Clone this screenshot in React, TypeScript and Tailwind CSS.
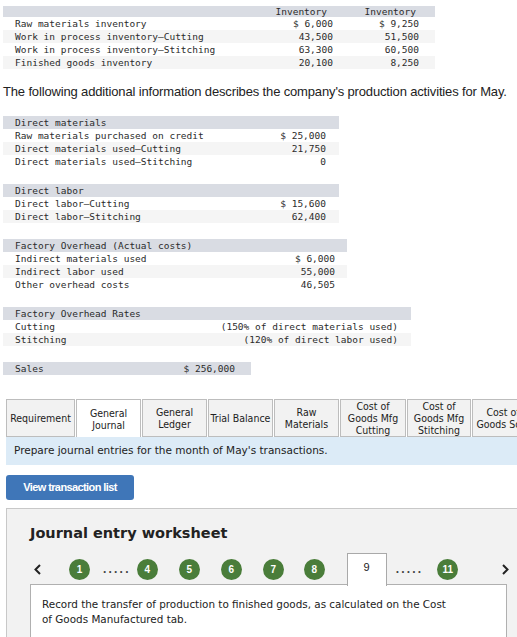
import React from 'react';

const MONO = "font-['DejaVu_Sans_Mono',monospace] text-[9.5px] text-[#2b2b2b]";
const COND = "font-['DejaVu_Sans_Condensed','DejaVu_Sans',sans-serif]";
const SANS = "font-['DejaVu_Sans',sans-serif]";

type Pair = [string, string];

function Sheet({ w, pr, title, rows }: { w: string; pr: string; title: string; rows: Pair[] }) {
  return (
    <div className={`${w} ml-[3px] ${MONO}`}>
      <div className="flex h-[13px] bg-[#d9dce3] leading-[13px]">
        <span className="pl-[12px]">{title}</span>
      </div>
      {rows.map(([label, value], i) => (
        <div key={label} className={`flex h-[13px] leading-[13px] ${i % 2 === 1 ? 'bg-[#f5f5f5]' : ''}`}>
          <span className="flex-1 pl-[12px]">{label}</span>
          <span className={`${pr} whitespace-pre`}>{value}</span>
        </div>
      ))}
    </div>
  );
}

function Inventories() {
  const rows: [string, string, string][] = [
    ['Raw materials inventory', '$ 6,000', '$ 9,250'],
    ['Work in process inventory\u2014Cutting', '43,500', '51,500'],
    ['Work in process inventory\u2014Stitching', '63,300', '60,500'],
    ['Finished goods inventory', '20,100', '8,250'],
  ];
  return (
    <div className={`mt-[6px] ml-[3px] w-[432px] ${MONO}`}>
      <div className="flex h-[11px] bg-[#d9dce3] leading-[11px]">
        <span className="flex-1" />
        <span className="w-[100px] pr-[6px] text-right">Inventory</span>
        <span className="w-[86px] pr-[3px] text-right">Inventory</span>
        <span className="w-[16px]" />
      </div>
      {rows.map(([label, a, b], i) => (
        <div key={label} className={`flex h-[13px] leading-[13px] ${i % 2 === 1 ? 'bg-[#f5f5f5]' : ''}`}>
          <span className="flex-1 pl-[12px]">{label}</span>
          <span className="w-[100px] text-right whitespace-pre">{a}</span>
          <span className="w-[86px] text-right whitespace-pre">{b}</span>
          <span className="w-[16px]" />
        </div>
      ))}
    </div>
  );
}

const tabs: { label: string[]; w: string; active?: boolean }[] = [
  { label: ['Requirement'], w: 'w-[69px]' },
  { label: ['General', 'Journal'], w: 'w-[65px]', active: true },
  { label: ['General', 'Ledger'], w: 'w-[65px]' },
  { label: ['Trial Balance'], w: 'w-[65px]' },
  { label: ['Raw', 'Materials'], w: 'w-[65px]' },
  { label: ['Cost of', 'Goods Mfg', 'Cutting'], w: 'w-[66px]' },
  { label: ['Cost of', 'Goods Mfg', 'Stitching'], w: 'w-[64px]' },
  { label: ['Cost of', 'Goods Sold'], w: 'w-[62px]' },
];

function Circle({ n }: { n: string }) {
  return (
    <span className="flex h-[21px] w-[21px] shrink-0 items-center justify-center rounded-full bg-[#4a7d3a] font-['Liberation_Sans',sans-serif] text-[10px] font-bold text-white">
      {n}
    </span>
  );
}

function Dots({ className }: { className: string }) {
  return (
    <span className={`${className} h-[21px] shrink-0 font-['Liberation_Sans',sans-serif] text-[12px] font-bold leading-[21px] tracking-[2.2px] text-[#444]`}>
      .....
    </span>
  );
}

function Chevron({ dir }: { dir: 'l' | 'r' }) {
  return (
    <svg width="7" height="11" viewBox="0 0 7 11" className="shrink-0">
      <polyline
        points={dir === 'l' ? '6,1 1.5,5.5 6,10' : '1,1 5.5,5.5 1,10'}
        fill="none"
        stroke="#222"
        strokeWidth="2"
      />
    </svg>
  );
}

export default function App() {
  return (
    <div className="flex h-[637px] w-[517px] flex-col overflow-hidden bg-white">
      <Inventories />

      <p className="mt-[15px] ml-[3px] h-[15px] whitespace-nowrap font-['Liberation_Sans',sans-serif] text-[13px] leading-[15px] tracking-[-0.15px] text-[#222]">
        The following additional information describes the company's production activities for May.
      </p>

      <div className="mt-[17px]">
        <Sheet
          w="w-[336px]"
          pr="pr-[13px]"
          title="Direct materials"
          rows={[
            ['Raw materials purchased on credit', '$ 25,000'],
            ['Direct materials used\u2014Cutting', '21,750'],
            ['Direct materials used\u2014Stitching', '0'],
          ]}
        />
      </div>
      <div className="mt-[16px]">
        <Sheet
          w="w-[336px]"
          pr="pr-[13px]"
          title="Direct labor"
          rows={[
            ['Direct labor\u2014Cutting', '$ 15,600'],
            ['Direct labor\u2014Stitching', '62,400'],
          ]}
        />
      </div>
      <div className="mt-[16px]">
        <Sheet
          w="w-[344px]"
          pr="pr-[12px]"
          title="Factory Overhead (Actual costs)"
          rows={[
            ['Indirect materials used', '$ 6,000'],
            ['Indirect labor used', '55,000'],
            ['Other overhead costs', '46,505'],
          ]}
        />
      </div>
      <div className="mt-[16px]">
        <Sheet
          w="w-[408px]"
          pr="pr-[13px]"
          title="Factory Overhead Rates"
          rows={[
            ['Cutting', '(150% of direct materials used)'],
            ['Stitching', '(120% of direct labor used)'],
          ]}
        />
      </div>
      <div className={`mt-[16px] ml-[3px] flex h-[13px] w-[248px] bg-[#d9dce3] leading-[13px] ${MONO}`}>
        <span className="flex-1 pl-[12px]">Sales</span>
        <span className="pr-[16px] whitespace-pre">$ 256,000</span>
      </div>

      {/* tabs */}
      <div className={`mt-[24px] ml-[6px] flex h-[39px] gap-px ${COND} text-[10.5px] leading-[12px] text-[#222]`}>
        {tabs.map((t) => (
          <div
            key={t.label.join(' ')}
            className={`${t.w} flex shrink-0 flex-col items-center justify-center border border-[#bdbdbd] text-center ${
              t.active ? 'border-b-0 bg-white' : 'bg-[#f2f2f2]'
            }`}
          >
            {t.label.map((l) => (
              <span key={l} className="whitespace-nowrap">
                {l}
              </span>
            ))}
          </div>
        ))}
      </div>
      <div className={`ml-[6px] flex h-[28px] shrink-0 items-center bg-[#dcebf7] pl-[8px] ${SANS} text-[10.5px] text-[#222]`}>
        Prepare journal entries for the month of May's transactions.
      </div>

      <button className="mt-[10px] ml-[6px] h-[25px] w-[128px] shrink-0 rounded-[3px] bg-[#3f76b8] font-['Liberation_Sans',sans-serif] text-[11px] font-bold tracking-[-0.6px] text-white">
        View transaction list
      </button>

      {/* worksheet */}
      <div className="mt-[8px] ml-[6px] w-[530px] shrink-0 grow border-t border-l border-[#c8c8c8] bg-[#f2f2f2] pt-[16px] pl-[23px]">
        <h2 className={`h-[16px] ${SANS} text-[14.5px] leading-[16px] font-bold text-[#222]`}>Journal entry worksheet</h2>

        <div className="mt-[12px] flex h-[32px] items-center">
          <span className="ml-[4px]">
            <Chevron dir="l" />
          </span>
          <span className="ml-[28px]">
            <Circle n="1" />
          </span>
          <Dots className="ml-[13px]" />
          <span className="ml-[6px]">
            <Circle n="4" />
          </span>
          <span className="ml-[21px]">
            <Circle n="5" />
          </span>
          <span className="ml-[21px]">
            <Circle n="6" />
          </span>
          <span className="ml-[21px]">
            <Circle n="7" />
          </span>
          <span className="ml-[20px]">
            <Circle n="8" />
          </span>
          <div className="relative z-10 ml-[22px] flex h-[33px] w-[40px] shrink-0 self-start justify-center border border-b-0 border-[#a9a9a9] bg-white pt-[5px] font-['Liberation_Sans',sans-serif] text-[11px] text-[#222]">
            9
          </div>
          <Dots className="ml-[9px]" />
          <span className="ml-[14px]">
            <Circle n="11" />
          </span>
          <span className="ml-[44px]">
            <Chevron dir="r" />
          </span>
        </div>

        <div className={`-mt-px h-[60px] w-[477px] border border-[#b0b0b0] bg-white pt-[12px] pl-[11px] ${SANS} text-[10.4px] leading-[15px] text-[#222]`}>
          Record the transfer of production to finished goods, as calculated on the Cost
          <br />
          of Goods Manufactured tab.
        </div>
      </div>
    </div>
  );
}
